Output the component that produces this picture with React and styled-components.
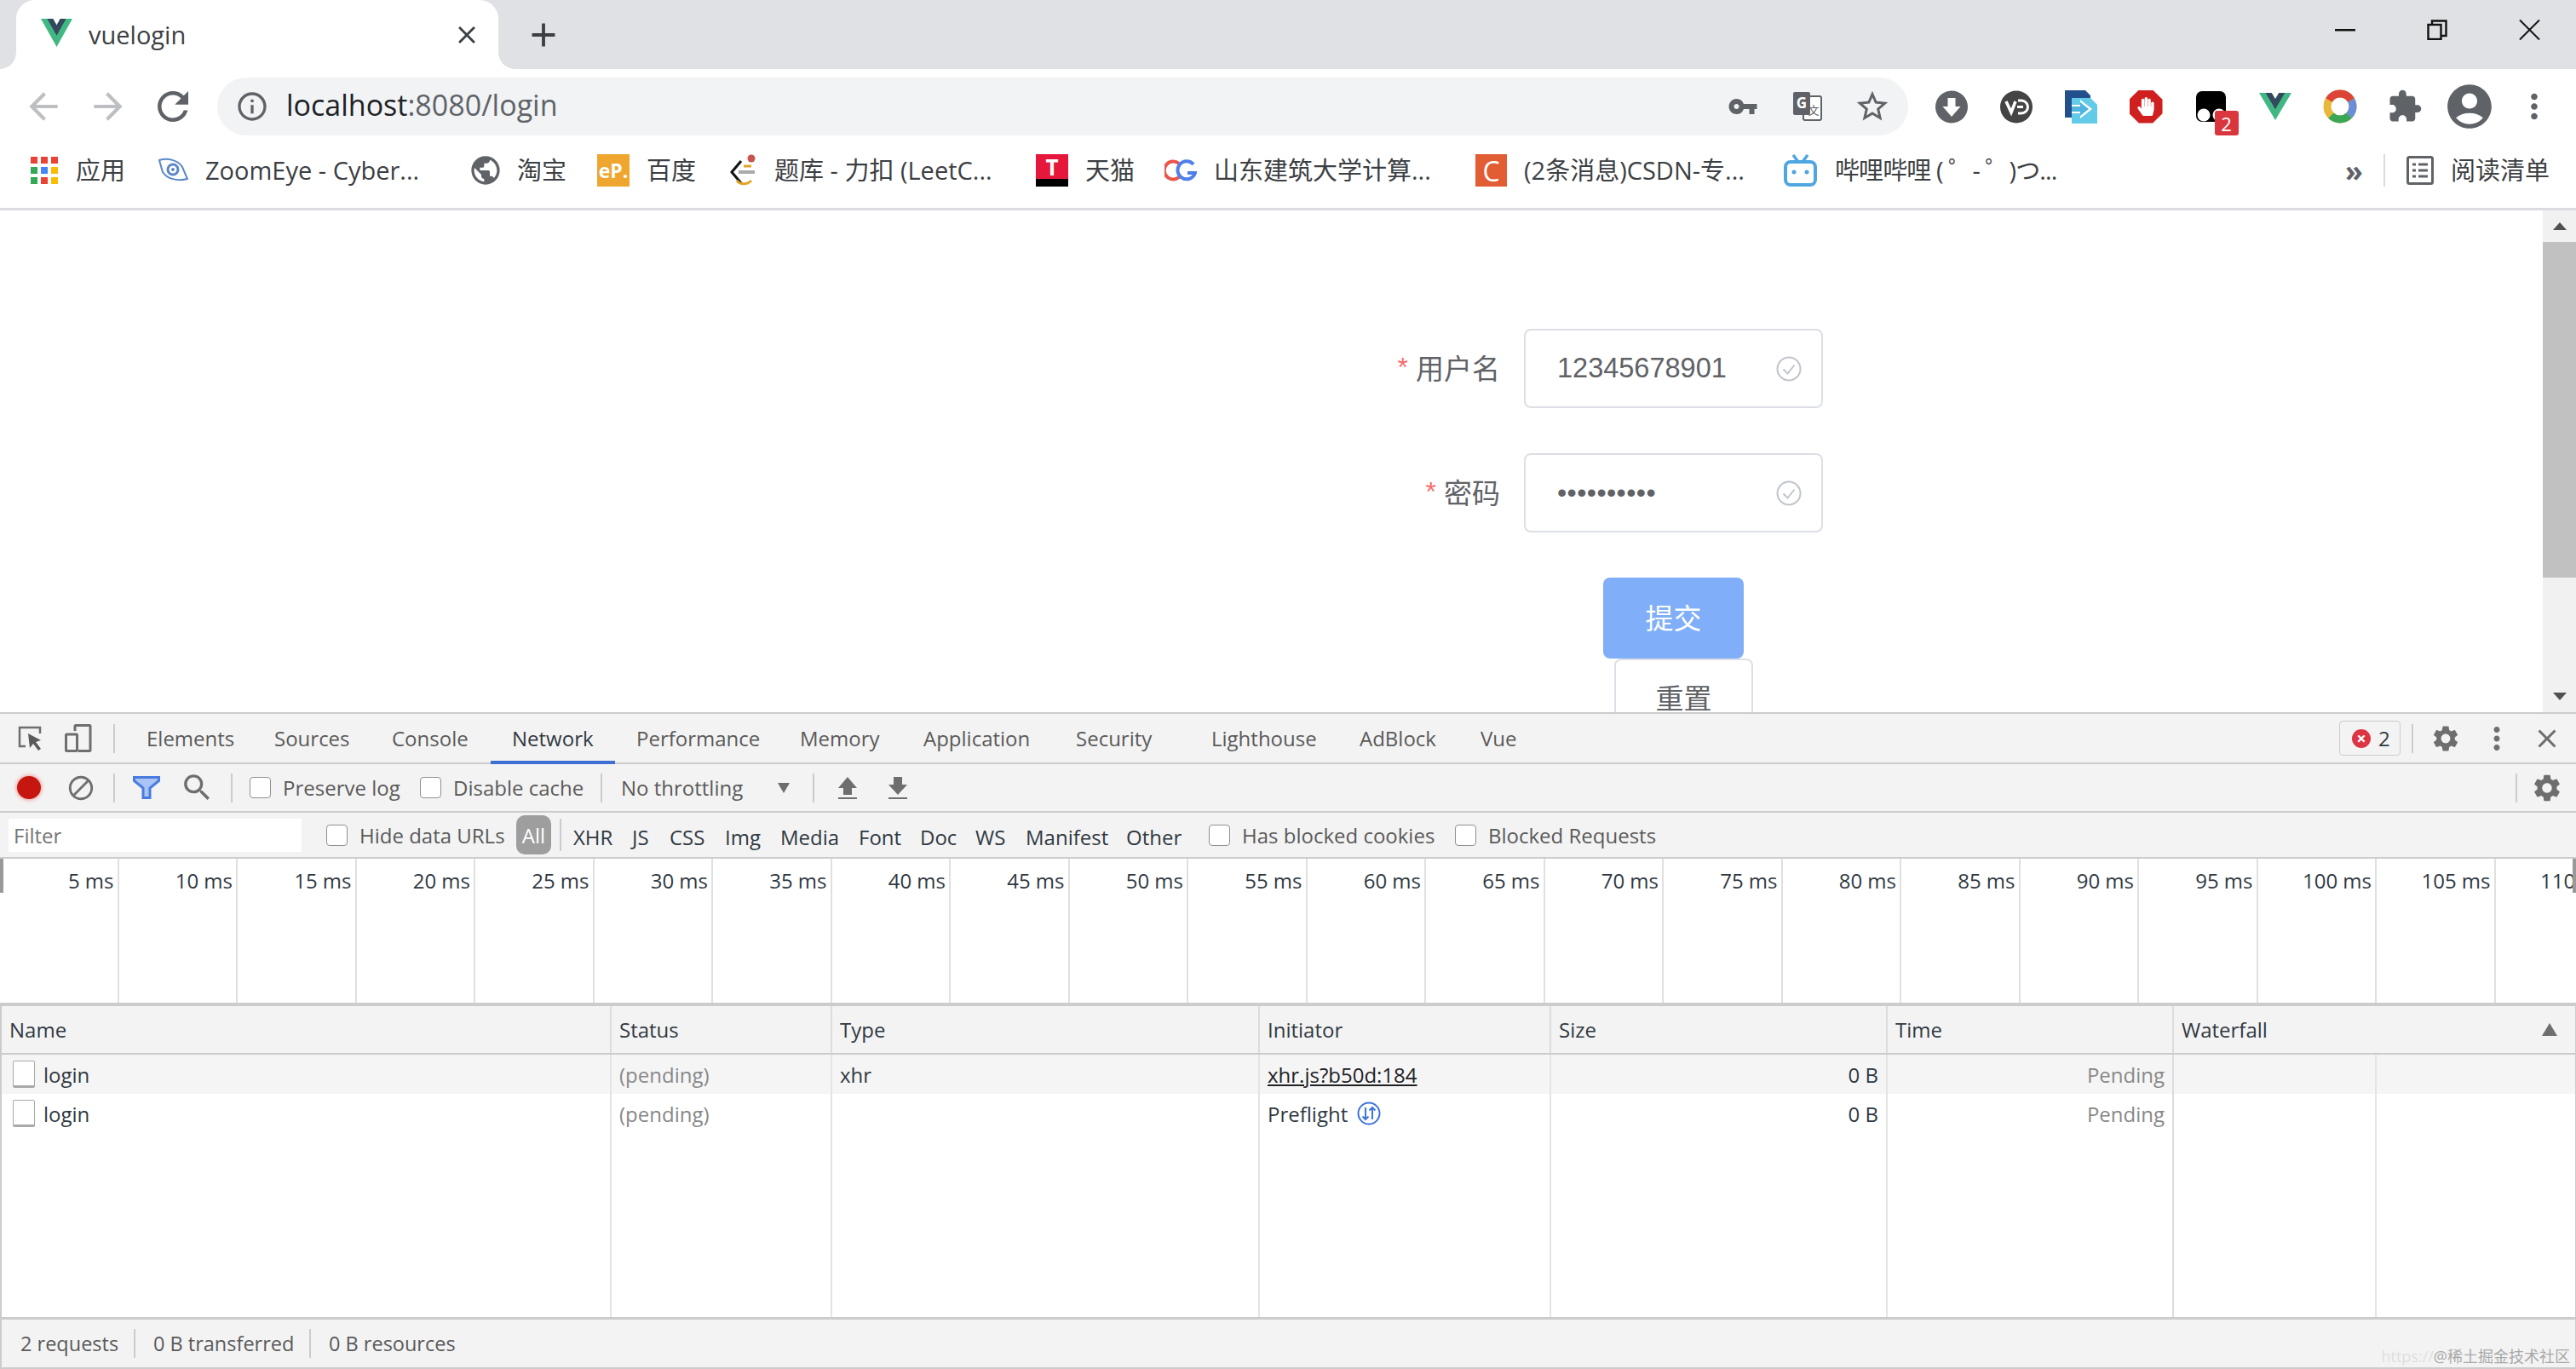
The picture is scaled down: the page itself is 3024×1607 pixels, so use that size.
import styled, { createGlobalStyle, css } from "styled-components";
import {
  MdArrowBack,
  MdArrowForward,
  MdRefresh,
  MdInfoOutline,
  MdVpnKey,
  MdStarBorder,
  MdExtension,
  MdAccountCircle,
  MdMoreVert,
  MdSettings,
  MdClose,
  MdSearch,
  MdBlock,
  MdPublic,
  MdAdd,
} from "react-icons/md";
import { FaHandPaper } from "react-icons/fa";

const sans = `"Open Sans", "Noto Sans CJK SC", sans-serif`;
const elementFont = `"Liberation Sans", "Noto Sans CJK SC", sans-serif`;

const GlobalStyle = createGlobalStyle`
  html, body {
    margin: 0;
    padding: 0;
    background: #fff;
  }
  * {
    box-sizing: border-box;
  }
`;

const offset = css`
  margin-left: ${(p) => p.$ml || 0}px;
`;

export default function App() {
  return (
    <Screen>
      <GlobalStyle />
      <TabStrip>
        <Tab>
          <VueLogo width={37} height={33} />
          <TabTitle>vuelogin</TabTitle>
          <MdClose size={34} color="#3c4043" />
        </Tab>
        <Slot $w={106}>
          <MdAdd size={46} color="#3c4043" />
        </Slot>
        <WindowButtons>
          <WindowButton>
            <MinimizeIcon />
          </WindowButton>
          <WindowButton>
            <RestoreIcon />
          </WindowButton>
          <WindowButton>
            <WindowCloseIcon />
          </WindowButton>
        </WindowButtons>
      </TabStrip>

      <Toolbar>
        <Slot $w={76}>
          <MdArrowBack size={50} color="#bdbfc2" />
        </Slot>
        <Slot $w={76}>
          <MdArrowForward size={50} color="#bdbfc2" />
        </Slot>
        <Slot $w={76}>
          <MdRefresh size={54} color="#5f6368" />
        </Slot>
        <Omnibox>
          <Slot $w={52}>
            <MdInfoOutline size={40} color="#5f6368" />
          </Slot>
          <Url>
            localhost<UrlRest>:8080/login</UrlRest>
          </Url>
          <Slot $w={76}>
            <MdVpnKey size={36} color="#5f6368" />
          </Slot>
          <Slot $w={76}>
            <TranslateIcon />
          </Slot>
          <Slot $w={76}>
            <MdStarBorder size={44} color="#5f6368" />
          </Slot>
        </Omnibox>
        <Extensions>
          <Slot $w={76}>
            <DownloadCircle />
          </Slot>
          <Slot $w={76}>
            <VdBadge />
          </Slot>
          <Slot $w={76}>
            <PasteIcon />
          </Slot>
          <Slot $w={76}>
            <Octagon>
              <FaHandPaper size={22} color="#fff" />
            </Octagon>
          </Slot>
          <Slot $w={76}>
            <MonkeyBox>
              <MonkeyIcon />
              <CountBadge>2</CountBadge>
            </MonkeyBox>
          </Slot>
          <Slot $w={76}>
            <VueLogo width={38} height={32} />
          </Slot>
          <Slot $w={76}>
            <RingIcon />
          </Slot>
          <Slot $w={76}>
            <MdExtension size={42} color="#5f6368" />
          </Slot>
          <Slot $w={76}>
            <MdAccountCircle size={62} color="#5f6368" />
          </Slot>
          <Slot $w={76}>
            <MdMoreVert size={46} color="#5f6368" />
          </Slot>
        </Extensions>
      </Toolbar>

      <BookmarkBar>
        <AppsIcon />
        <BookmarkText $ml={21} $w={56}>应用</BookmarkText>
        <EyeIcon $ml={41} />
        <BookmarkText $ml={20} $w={256}>ZoomEye - Cyber...</BookmarkText>
        <IconHolder $ml={53}>
          <MdPublic size={40} color="#5f6368" />
        </IconHolder>
        <BookmarkText $ml={17} $w={56}>淘宝</BookmarkText>
        <SquareIcon $ml={38} $w={38} $bg="#eea62f">eP.</SquareIcon>
        <BookmarkText $ml={20} $w={56}>百度</BookmarkText>
        <LeetIcon $ml={42} />
        <BookmarkText $ml={22} $w={259}>题库 - 力扣 (LeetC...</BookmarkText>
        <TmallIcon $ml={48}>T</TmallIcon>
        <BookmarkText $ml={20} $w={56}>天猫</BookmarkText>
        <CgIcon $ml={37} />
        <BookmarkText $ml={20} $w={249}>山东建筑大学计算...</BookmarkText>
        <SquareIcon $ml={58} $w={37} $bg="#e25c34" $big>C</SquareIcon>
        <BookmarkText $ml={20} $w={263}>(2条消息)CSDN-专...</BookmarkText>
        <BiliIcon $ml={42} />
        <BookmarkText $ml={21} $w={257} $ls={-0.9}>哔哩哔哩 ( ゜- ゜)つ...</BookmarkText>
        <Chevrons>»</Chevrons>
        <BarDivider />
        <ReadingIcon $ml={25} />
        <BookmarkText $ml={20} $w={114}>阅读清单</BookmarkText>
      </BookmarkBar>

      <Page>
        <PageBody>
          <FormRow>
            <FieldLabel>
              <Asterisk>*</Asterisk>用户名
            </FieldLabel>
            <InputBox>
              <InputValue>12345678901</InputValue>
              <CheckCircle />
            </InputBox>
          </FormRow>
          <FormRow>
            <FieldLabel>
              <Asterisk>*</Asterisk>密码
            </FieldLabel>
            <InputBox>
              <PasswordDots>••••••••••</PasswordDots>
              <CheckCircle />
            </InputBox>
          </FormRow>
          <SubmitButton>提交</SubmitButton>
          <ResetButton>重置</ResetButton>
        </PageBody>
        <Scrollbar>
          <ScrollArrow>
            <ArrowUp />
          </ScrollArrow>
          <ScrollThumb />
          <ScrollGap />
          <ScrollArrow>
            <ArrowDown />
          </ScrollArrow>
        </Scrollbar>
      </Page>

      <Devtools>
        <PanelBar>
          <Slot $w={56} $ml={8}>
            <InspectIcon />
          </Slot>
          <Slot $w={56}>
            <DeviceIcon />
          </Slot>
          <VerticalRule $ml={13} />
          <PanelTabs>
            {panels.map(([label, width]) => (
              <PanelTab key={label} $w={width} $active={label === "Network"}>
                {label}
              </PanelTab>
            ))}
          </PanelTabs>
          <ErrorBadge>
            <ErrorDot />2
          </ErrorBadge>
          <VerticalRule $ml={13} />
          <Slot $w={50} $ml={13}>
            <MdSettings size={36} color="#6e6e6e" />
          </Slot>
          <Slot $w={50} $ml={10}>
            <MdMoreVert size={42} color="#6e6e6e" />
          </Slot>
          <Slot $w={50} $ml={9}>
            <MdClose size={36} color="#6e6e6e" />
          </Slot>
        </PanelBar>

        <ActionBar>
          <RecordDot $ml={20} />
          <IconHolder $ml={30}>
            <MdBlock size={34} color="#6e6e6e" />
          </IconHolder>
          <VerticalRule $ml={21} />
          <FunnelIcon $ml={21} />
          <IconHolder $ml={23}>
            <MdSearch size={41} color="#6e6e6e" />
          </IconHolder>
          <VerticalRule $ml={19} />
          <CheckLabel $ml={20} $w={176}>
            <Check />
            Preserve log
          </CheckLabel>
          <CheckLabel $ml={24} $w={191}>
            <Check />
            Disable cache
          </CheckLabel>
          <VerticalRule $ml={21} />
          <ActionText $ml={22} $w={184}>No throttling</ActionText>
          <CaretDown />
          <VerticalRule $ml={27} />
          <TransferIcon $ml={27} $up />
          <TransferIcon $ml={35} />
          <SpacerRule />
          <Slot $w={40} $ml={15}>
            <MdSettings size={38} color="#6e6e6e" />
          </Slot>
        </ActionBar>

        <FilterBar>
          <FilterInput>Filter</FilterInput>
          <CheckLabel $ml={29} $w={210}>
            <Check />
            Hide data URLs
          </CheckLabel>
          <AllPill>All</AllPill>
          <VerticalRule $ml={10} $short />
          <TypeList>
            {types.map(([label, width]) => (
              <TypeItem key={label} $w={width}>
                {label}
              </TypeItem>
            ))}
          </TypeList>
          <CheckLabel $w={267}>
            <Check />
            Has blocked cookies
          </CheckLabel>
          <CheckLabel $ml={22} $w={240}>
            <Check />
            Blocked Requests
          </CheckLabel>
        </FilterBar>

        <Overview>
          {ticks.map((t) => (
            <Tick key={t}>{t} ms</Tick>
          ))}
          <MarkLeft />
          <MarkRight />
        </Overview>

        <Table>
          <HeaderRow>
            <HeaderCell>Name</HeaderCell>
            <HeaderCell>Status</HeaderCell>
            <HeaderCell>Type</HeaderCell>
            <HeaderCell>Initiator</HeaderCell>
            <HeaderCell>Size</HeaderCell>
            <HeaderCell>Time</HeaderCell>
            <HeaderCell>
              Waterfall
              <SortArrow />
            </HeaderCell>
          </HeaderRow>
          <BodyRow $shaded>
            <Cell>
              <FileIcon />
              login
            </Cell>
            <Cell $muted>(pending)</Cell>
            <Cell>xhr</Cell>
            <Cell>
              <InitiatorLink>xhr.js?b50d:184</InitiatorLink>
            </Cell>
            <Cell $right>0 B</Cell>
            <Cell $right $muted>Pending</Cell>
            <WaterfallCell />
          </BodyRow>
          <BodyRow>
            <Cell>
              <FileIcon />
              login
            </Cell>
            <Cell $muted>(pending)</Cell>
            <Cell />
            <Cell>
              Preflight
              <PreflightIcon />
            </Cell>
            <Cell $right>0 B</Cell>
            <Cell $right $muted>Pending</Cell>
            <WaterfallCell />
          </BodyRow>
          <FillerRow>
            <Cell />
            <Cell />
            <Cell />
            <Cell />
            <Cell />
            <Cell />
            <WaterfallCell />
          </FillerRow>
        </Table>

        <Summary>
          <SummaryItem $w={157} $pad={22}>2 requests</SummaryItem>
          <SummaryItem $w={206} $pad={21}>0 B transferred</SummaryItem>
          <SummaryItem $pad={21} $last>0 B resources</SummaryItem>
          <Watermark>
            <WatermarkUrl>https://</WatermarkUrl>@稀土掘金技术社区
          </Watermark>
        </Summary>
      </Devtools>
    </Screen>
  );
}

const panels = [
  ["Elements", 150],
  ["Sources", 138],
  ["Console", 141],
  ["Network", 146],
  ["Performance", 192],
  ["Memory", 145],
  ["Application", 179],
  ["Security", 159],
  ["Lighthouse", 174],
  ["AdBlock", 142],
  ["Vue", 92],
];

const types = [
  ["XHR", 69],
  ["JS", 44],
  ["CSS", 65],
  ["Img", 65],
  ["Media", 92],
  ["Font", 72],
  ["Doc", 65],
  ["WS", 59],
  ["Manifest", 118],
  ["Other", 97],
];

const ticks = Array.from({ length: 22 }, (_, i) => (i + 1) * 5);

/* drawn icons */

function VueLogo({ width, height }) {
  return (
    <svg width={width} height={height} viewBox="0 0 262 227" preserveAspectRatio="none">
      <path d="M161 0l-30 52-30-52H0l131 227L262 0z" fill="#41b883" />
      <path d="M161 0l-30 52-30-52H52l79 136L209 0z" fill="#34495e" />
    </svg>
  );
}

function MinimizeIcon() {
  return (
    <svg width="24" height="4" viewBox="0 0 24 4">
      <rect width="24" height="2.500" y="1" fill="#111" />
    </svg>
  );
}

function RestoreIcon() {
  return (
    <svg width="24" height="24" viewBox="0 0 24 24" fill="none" stroke="#111" strokeWidth="2.400">
      <rect x="1.500" y="6" width="15" height="17" />
      <path d="M6 5V1.500h16.500V19H17" />
    </svg>
  );
}

function WindowCloseIcon() {
  return (
    <svg width="25" height="24" viewBox="0 0 25 24" fill="none" stroke="#111" strokeWidth="2">
      <path d="M1 0.500l23 23M24 0.500l-23 23" />
    </svg>
  );
}

function TranslateIcon() {
  return (
    <svg width="34" height="36" viewBox="0 0 34 36">
      <rect x="12" y="6" width="21" height="28" rx="2" fill="#fff" stroke="#5f6368" strokeWidth="2" />
      <rect x="0" y="1" width="20" height="27" rx="2" fill="#5f6368" />
      <text x="10" y="20" textAnchor="middle" fontSize="17" fontWeight="700" fill="#fff" fontFamily="Open Sans">G</text>
      <text x="24" y="27" textAnchor="middle" fontSize="13" fill="#5f6368" fontFamily="Noto Sans CJK SC">文</text>
    </svg>
  );
}

function DownloadCircle() {
  return (
    <svg width="38" height="39" viewBox="0 0 38 39">
      <circle cx="19" cy="19.500" r="19" fill="#5f6368" />
      <path d="M14.500 9h9v10h6L19 31 8.500 19h6z" fill="#fff" />
    </svg>
  );
}

function VdBadge() {
  return (
    <svg width="38" height="39" viewBox="0 0 38 39">
      <circle cx="19" cy="19.500" r="19" fill="#444" />
      <path d="M7 13l6 13 5-13" fill="none" stroke="#fff" strokeWidth="3.500" />
      <path d="M21 12h4a7.500 7.500 0 0 1 0 15h-4M20 19.500h7" fill="none" stroke="#fff" strokeWidth="3" />
    </svg>
  );
}

function PasteIcon() {
  return (
    <svg width="38" height="39" viewBox="0 0 38 39">
      <path d="M0 0h24l6 6v4H8v22H0z" fill="#23508c" />
      <path d="M8 9h22l8 8v22H8z" fill="#62cbe8" />
      <path d="M8 17h10v-6l14 11-14 11v-6H8z" fill="#fff" />
      <path d="M18 14l10 8-10 8v-5H8v-6h10z" fill="#4fb4de" />
    </svg>
  );
}

function MonkeyIcon() {
  return (
    <svg width="35" height="36" viewBox="0 0 35 36">
      <rect width="35" height="36" rx="7" fill="#000" />
      <circle cx="9" cy="28" r="7.500" fill="#fff" />
      <circle cx="27" cy="28" r="7.500" fill="#fff" />
    </svg>
  );
}

function RingIcon() {
  return (
    <svg width="40" height="40" viewBox="0 0 40 40" fill="none" strokeWidth="9">
      <circle cx="20" cy="20" r="15" stroke="#e8b83a" />
      <path d="M7 12.500A15 15 0 0 1 33 12.500" stroke="#db4437" />
      <path d="M33 12.500A15 15 0 0 1 30.600 30.600" stroke="#6a8fd8" />
      <path d="M30.600 30.600A15 15 0 0 1 9.400 30.600" stroke="#3aa757" />
    </svg>
  );
}

function AppsIcon() {
  const colors = ["#ea4335", "#ea4335", "#ea4335", "#34a853", "#4285f4", "#fbbc05", "#34a853", "#ea4335", "#fbbc05"];
  return (
    <svg width="32" height="32" viewBox="0 0 32 32">
      {colors.map((c, i) => (
        <rect key={i} x={(i % 3) * 12} y={Math.floor(i / 3) * 12} width="8" height="8" fill={c} />
      ))}
    </svg>
  );
}

const Svg = styled.svg`
  flex: none;
  ${offset}
`;

function EyeIcon({ $ml }) {
  return (
    <Svg $ml={$ml} width="35" height="34" viewBox="0 0 35 34" fill="none" stroke="#5b87c7">
      <path d="M1 5c10-3 22 0 27 8l6 14c-12 3-24 0-29-8z" strokeWidth="2" />
      <circle cx="17" cy="16" r="6" strokeWidth="3" />
      <circle cx="17" cy="16" r="1.500" fill="#5b87c7" />
    </Svg>
  );
}

function LeetIcon({ $ml }) {
  return (
    <Svg $ml={$ml} width="30" height="38" viewBox="0 0 30 38" fill="none" strokeWidth="3">
      <path d="M13 8L2 21l11 13" stroke="#111" />
      <path d="M16 14l9 0" stroke="#e0a526" />
      <path d="M10 21h19" stroke="#aaa" strokeWidth="4" />
      <path d="M8 31c4 5 12 5 17 0" stroke="#e0a526" />
      <circle cx="25" cy="5" r="4.500" fill="#c8534f" stroke="none" />
    </Svg>
  );
}

function CgIcon({ $ml }) {
  return (
    <Svg $ml={$ml} width="38" height="26" viewBox="0 0 38 26" fill="none" strokeWidth="4">
      <path d="M17 5a10.500 10.500 0 1 0 0 16" stroke="#e8564c" />
      <path d="M34 6a10.500 10.500 0 1 0 2 10h-9" stroke="#4f7fe8" />
    </Svg>
  );
}

function BiliIcon({ $ml }) {
  return (
    <Svg $ml={$ml} width="39" height="38" viewBox="0 0 39 38" fill="none">
      <rect x="2" y="9" width="35" height="27" rx="6" stroke="#4fa6e0" strokeWidth="4" />
      <path d="M11 1l6 8M28 1l-6 8" stroke="#4fa6e0" strokeWidth="3.500" />
      <circle cx="12" cy="21" r="2.500" fill="#4fa6e0" />
      <circle cx="27" cy="21" r="2.500" fill="#4fa6e0" />
    </Svg>
  );
}

function ReadingIcon({ $ml }) {
  return (
    <Svg $ml={$ml} width="32" height="34" viewBox="0 0 32 34" fill="none" stroke="#5f6368" strokeWidth="3">
      <rect x="1.500" y="1.500" width="29" height="31" rx="2" />
      <path d="M7 10h4M14 10h11M7 17h4M14 17h11M7 24h4M14 24h11" />
    </Svg>
  );
}

function CheckCircle() {
  return (
    <svg width="30" height="30" viewBox="0 0 30 30" fill="none" stroke="#c0c4cc" strokeWidth="2">
      <circle cx="15" cy="15" r="13.500" />
      <path d="M8.500 15.500l5 5 8-10" />
    </svg>
  );
}

function InspectIcon() {
  return (
    <svg width="30" height="30" viewBox="0 0 30 30" fill="none">
      <path d="M9 24H2V2h24v7" stroke="#6e6e6e" strokeWidth="2.500" />
      <path d="M12 9l15 8-6 2 6 8-3 2-6-8-4 5z" fill="#5a5a5a" />
    </svg>
  );
}

function DeviceIcon() {
  return (
    <svg width="32" height="33" viewBox="0 0 32 33" fill="none" stroke="#6e6e6e" strokeWidth="3">
      <path d="M12 8V2.500a1 1 0 0 1 1-1h16a1 1 0 0 1 1 1v28a1 1 0 0 1-1 1H16" />
      <rect x="1.500" y="12" width="13" height="19.500" rx="1" />
    </svg>
  );
}

function FunnelIcon({ $ml }) {
  return (
    <Svg $ml={$ml} width="32" height="27" viewBox="0 0 32 27">
      <path d="M1.500 1.500h29v4L20 14v11.500h-8V14L1.500 5.500z" fill="#a9c4f5" stroke="#4a7ce0" strokeWidth="3" />
    </Svg>
  );
}

function TransferIcon({ $ml, $up }) {
  return (
    <Svg $ml={$ml} width="24" height="26" viewBox="0 0 24 26" fill="#6e6e6e">
      <path d={$up ? "M12 0l11 13h-6v8H7v-8H1z" : "M7 0h10v9h6L12 21 1 9h6z"} />
      <rect x="1" y="24" width="22" height="2" />
    </Svg>
  );
}

function PreflightIcon() {
  return (
    <PreflightSvg width="28" height="28" viewBox="0 0 28 28" fill="none" stroke="#3f74dc" strokeWidth="2">
      <circle cx="14" cy="14" r="12.500" />
      <path d="M10 7v14M6.500 17.500L10 21l3.500-3.500M18 21V7M14.500 10.500L18 7l3.500 3.500" />
    </PreflightSvg>
  );
}

/* layout */

const Screen = styled.div`
  width: 3024px;
  height: 1607px;
  display: flex;
  flex-direction: column;
  overflow: hidden;
  background: #fff;
  font-family: ${sans};
`;

const Slot = styled.div`
  flex: none;
  width: ${(p) => p.$w}px;
  display: flex;
  align-items: center;
  justify-content: center;
  ${offset}
`;

const IconHolder = styled.div`
  flex: none;
  display: flex;
  align-items: center;
  ${offset}
`;

const TabStrip = styled.div`
  flex: none;
  height: 81px;
  display: flex;
  padding-left: 19px;
  background: #dfe1e5;
`;

const Tab = styled.div`
  position: relative;
  width: 566px;
  display: flex;
  align-items: center;
  padding: 0 20px 0 29px;
  background: #fff;
  border-radius: 22px 22px 0 0;

  &::before,
  &::after {
    content: "";
    position: absolute;
    bottom: 0;
    width: 19px;
    height: 19px;
  }

  &::before {
    left: -19px;
    background: radial-gradient(circle at 0 0, #dfe1e5 18.500px, #fff 19px);
  }

  &::after {
    right: -19px;
    background: radial-gradient(circle at 100% 0, #dfe1e5 18.500px, #fff 19px);
  }

  & > svg:first-child {
    margin-top: -4px;
  }
`;

const TabTitle = styled.span`
  flex: 1;
  margin-left: 19px;
  font-size: 29px;
  color: #3c4043;
`;

const WindowButtons = styled.div`
  display: flex;
  margin-left: auto;
  padding-right: 1px;
`;

const WindowButton = styled.div`
  width: 108px;
  height: 70px;
  display: flex;
  align-items: center;
  justify-content: center;
`;

const Toolbar = styled.div`
  flex: none;
  height: 84px;
  display: flex;
  align-items: center;
  padding: 4px 0 0 13px;
  background: #fff;
`;

const Omnibox = styled.div`
  flex: none;
  width: 1985px;
  height: 68px;
  margin-left: 14px;
  display: flex;
  align-items: center;
  padding: 0 4px 0 15px;
  background: #f1f3f4;
  border-radius: 34px;
`;

const Url = styled.div`
  flex: 1;
  margin-left: 14px;
  padding-bottom: 4px;
  font-size: 34px;
  color: #202124;
`;

const UrlRest = styled.span`
  color: #5f6368;
`;

const Extensions = styled.div`
  flex: none;
  margin-left: 13px;
  display: flex;
  align-items: center;
`;

const Octagon = styled.div`
  width: 39px;
  height: 39px;
  display: flex;
  align-items: center;
  justify-content: center;
  background: #d01f1f;
  clip-path: polygon(29% 0, 71% 0, 100% 29%, 100% 71%, 71% 100%, 29% 100%, 0 71%, 0 29%);
`;

const MonkeyBox = styled.div`
  position: relative;
  width: 35px;
  height: 36px;
`;

const CountBadge = styled.div`
  position: absolute;
  left: 22px;
  top: 23px;
  width: 28px;
  height: 29px;
  display: flex;
  align-items: center;
  justify-content: center;
  background: #d9363e;
  border-radius: 3px;
  color: #fff;
  font-size: 22px;
`;

const BookmarkBar = styled.div`
  flex: none;
  height: 82px;
  display: flex;
  align-items: center;
  padding: 0 0 9px 36px;
  border-bottom: 3px solid #dadce0;
  background: #fff;
`;

const BookmarkText = styled.div`
  flex: none;
  width: ${(p) => p.$w}px;
  font-size: 29px;
  line-height: 38px;
  letter-spacing: ${(p) => p.$ls || 0}px;
  color: #3c4043;
  white-space: nowrap;
  ${offset}
`;

const SquareIcon = styled.div`
  flex: none;
  width: ${(p) => p.$w}px;
  height: 38px;
  display: flex;
  align-items: center;
  justify-content: center;
  background: ${(p) => p.$bg};
  color: #fff;
  font-size: ${(p) => (p.$big ? 32 : 23)}px;
  font-weight: ${(p) => (p.$big ? 400 : 700)};
  ${offset}
`;

const TmallIcon = styled.div`
  flex: none;
  width: 38px;
  height: 38px;
  display: flex;
  justify-content: center;
  background: linear-gradient(#e5173a 0 76%, #000 76%);
  color: #fff;
  font-size: 26px;
  font-weight: 700;
  line-height: 30px;
  ${offset}
`;

const Chevrons = styled.div`
  flex: none;
  margin-left: 342px;
  width: 21px;
  font-size: 34px;
  line-height: 36px;
  font-weight: 700;
  color: #5f6368;
`;

const BarDivider = styled.div`
  flex: none;
  width: 2px;
  height: 38px;
  margin-left: 24px;
  background: #dadce0;
`;

const Page = styled.div`
  flex: none;
  height: 589px;
  display: flex;
  overflow: hidden;
  background: #fff;
`;

const PageBody = styled.div`
  flex: 1;
  padding-top: 139px;
  font-family: ${elementFont};
`;

const FormRow = styled.div`
  display: grid;
  grid-template-columns: 1761px 351px;
  column-gap: 28px;
  height: 93px;
  margin-bottom: 53px;
`;

const FieldLabel = styled.div`
  display: flex;
  align-items: center;
  justify-content: flex-end;
  padding-bottom: 3px;
  font-size: 33px;
  color: #606266;
`;

const Asterisk = styled.span`
  margin-right: 9px;
  font-size: 32px;
  color: #f56c6c;
`;

const InputBox = styled.div`
  display: flex;
  align-items: center;
  justify-content: space-between;
  padding: 0 23px 0 37px;
  border: 2px solid #dcdfe6;
  border-radius: 8px;
`;

const InputValue = styled.span`
  font-size: 32.500px;
  color: #606266;
`;

const PasswordDots = styled.span`
  font-size: 32px;
  letter-spacing: 0.400px;
  color: #606266;
`;

const elementButton = css`
  display: flex;
  align-items: center;
  justify-content: center;
  padding-bottom: 4px;
  font-size: 33px;
  border-radius: 8px;
`;

const SubmitButton = styled.div`
  ${elementButton}
  width: 165px;
  height: 95px;
  margin-left: 1882px;
  background: #80aef9;
  color: #fff;
`;

const ResetButton = styled.div`
  ${elementButton}
  width: 163px;
  height: 93px;
  margin-left: 1895px;
  border: 2px solid #dcdfe6;
  color: #606266;
`;

const Scrollbar = styled.div`
  flex: none;
  width: 39px;
  display: flex;
  flex-direction: column;
  background: #f1f1f1;
`;

const ScrollArrow = styled.div`
  flex: none;
  height: 37px;
  display: flex;
  align-items: center;
  justify-content: center;
`;

const ArrowUp = styled.div`
  border-left: 8px solid transparent;
  border-right: 8px solid transparent;
  border-bottom: 9px solid #505050;
`;

const ArrowDown = styled.div`
  border-left: 8px solid transparent;
  border-right: 8px solid transparent;
  border-top: 9px solid #505050;
`;

const ScrollThumb = styled.div`
  flex: none;
  height: 394px;
  background: #c1c1c1;
`;

const ScrollGap = styled.div`
  flex: 1;
`;

const Devtools = styled.div`
  flex: 1;
  min-height: 0;
  display: flex;
  flex-direction: column;
  background: #f3f3f3;
  font-size: 24px;
  color: #303942;
`;

const PanelBar = styled.div`
  flex: none;
  height: 61px;
  display: flex;
  align-items: center;
  padding-right: 9px;
  border-top: 2px solid #ccc;
  border-bottom: 2px solid #ccc;
`;

const VerticalRule = styled.div`
  flex: none;
  width: 2px;
  height: ${(p) => (p.$short ? 38 : 34)}px;
  background: #ccc;
  ${offset}
`;

const PanelTabs = styled.div`
  flex: 1;
  align-self: stretch;
  display: flex;
  margin-left: 12px;
`;

const PanelTab = styled.div`
  flex: none;
  width: ${(p) => p.$w}px;
  padding: 2px 0 0 25px;
  margin-bottom: -2px;
  display: flex;
  align-items: center;
  color: ${(p) => (p.$active ? "#303942" : "#5a5a5a")};
  border-bottom: 4px solid ${(p) => (p.$active ? "#3f6fd4" : "transparent")};
`;

const ErrorBadge = styled.div`
  flex: none;
  width: 72px;
  height: 41px;
  display: flex;
  align-items: center;
  gap: 9px;
  padding-left: 14px;
  border: 1px solid #ccc;
  border-radius: 4px;
`;

const ErrorDot = styled.div`
  position: relative;
  flex: none;
  width: 22px;
  height: 22px;
  border-radius: 50%;
  background: #dc3543;

  &::before {
    content: "×";
    position: absolute;
    inset: 0;
    display: flex;
    align-items: center;
    justify-content: center;
    color: #fff;
    font-size: 20px;
    font-weight: 700;
  }
`;

const ActionBar = styled.div`
  flex: none;
  height: 57px;
  display: flex;
  align-items: center;
  padding-right: 14px;
  border-bottom: 2px solid #ccc;
`;

const RecordDot = styled.div`
  flex: none;
  width: 28px;
  height: 27px;
  border-radius: 50%;
  background: #c5170f;
  box-shadow: 0 0 4px 1px #ee9a96;
  ${offset}
`;

const CheckLabel = styled.div`
  flex: none;
  width: ${(p) => p.$w}px;
  display: flex;
  align-items: center;
  gap: 14px;
  color: #5a5a5a;
  white-space: nowrap;
  ${offset}
`;

const Check = styled.div`
  flex: none;
  width: 25px;
  height: 25px;
  background: #fff;
  border: 1.500px solid #909090;
  border-radius: 4px;
`;

const ActionText = styled.div`
  flex: none;
  width: ${(p) => p.$w}px;
  color: #5a5a5a;
  ${offset}
`;

const CaretDown = styled.div`
  flex: none;
  border-left: 7px solid transparent;
  border-right: 7px solid transparent;
  border-top: 12px solid #6e6e6e;
`;

const SpacerRule = styled(VerticalRule)`
  margin-left: auto;
`;

const FilterBar = styled.div`
  flex: none;
  height: 54px;
  display: flex;
  align-items: center;
  padding-left: 10px;
  border-bottom: 2px solid #ccc;
`;

const FilterInput = styled.div`
  flex: none;
  width: 344px;
  height: 39px;
  display: flex;
  align-items: center;
  padding-left: 6px;
  background: #fff;
  color: #757575;
`;

const AllPill = styled.div`
  flex: none;
  width: 41px;
  height: 46px;
  margin-left: 13px;
  display: flex;
  align-items: center;
  justify-content: center;
  border-radius: 10px;
  background: #9e9e9e;
  color: #fff;
`;

const TypeList = styled.div`
  flex: none;
  display: flex;
  margin-left: 14px;
  padding-top: 4px;
`;

const TypeItem = styled.div`
  flex: none;
  width: ${(p) => p.$w}px;
  color: #303942;
`;

const Overview = styled.div`
  position: relative;
  flex: none;
  height: 173px;
  display: flex;
  overflow: hidden;
  background: #fff;
  border-bottom: 4px solid #ccc;
`;

const Tick = styled.div`
  flex: none;
  width: 139.500px;
  padding: 9px 4px 0 0;
  text-align: right;
  white-space: nowrap;
  color: #303942;
  border-right: 2px solid #e0e0e0;
`;

const MarkLeft = styled.div`
  position: absolute;
  left: 0;
  top: 0;
  width: 4px;
  height: 40px;
  background: #999;
`;

const MarkRight = styled(MarkLeft)`
  left: auto;
  right: 0;
`;

const Table = styled.div`
  flex: 1;
  min-height: 0;
  display: flex;
  flex-direction: column;
  background: #fff;
  border-left: 2px solid #ccc;
  border-right: 1px solid #ccc;
`;

const columns = css`
  display: grid;
  grid-template-columns: 716px 259px 502px 342px 395px 336px 1fr;
`;

const HeaderRow = styled.div`
  ${columns}
  flex: none;
  height: 57px;
  background: #f3f3f3;
  border-bottom: 2px solid #ccc;
`;

const HeaderCell = styled.div`
  position: relative;
  display: flex;
  align-items: center;
  padding-left: 9px;
  border-right: 2px solid #dcdcdc;

  &:last-child {
    border-right: none;
  }
`;

const SortArrow = styled.div`
  position: absolute;
  right: 21px;
  top: 20px;
  border-left: 9px solid transparent;
  border-right: 9px solid transparent;
  border-bottom: 15px solid #6e6e6e;
`;

const BodyRow = styled.div`
  ${columns}
  flex: none;
  height: 46px;
  background: ${(p) => (p.$shaded ? "#f5f5f5" : "#fff")};
`;

const FillerRow = styled.div`
  ${columns}
  flex: 1;
`;

const Cell = styled.div`
  display: flex;
  align-items: center;
  justify-content: ${(p) => (p.$right ? "flex-end" : "flex-start")};
  padding: 0 9px;
  border-right: 2px solid #e4e4e4;
  color: ${(p) => (p.$muted ? "#888" : "#303942")};
`;

const WaterfallCell = styled.div`
  border-left: 2px solid #dcdcdc;
  margin-left: -2px;

  &::before {
    content: "";
    display: block;
    width: 236px;
    height: 100%;
    border-right: 2px solid #e4e4e4;
  }
`;

const FileIcon = styled.div`
  flex: none;
  width: 26px;
  height: 32px;
  margin: 0 10px 0 4px;
  background: #fff;
  border: 1.500px solid #a9a9a9;
  border-bottom-width: 3px;
  border-radius: 2px;
`;

const InitiatorLink = styled.span`
  color: #202124;
  text-decoration: underline;
`;

const PreflightSvg = styled.svg`
  flex: none;
  margin-left: 11px;
`;

const Summary = styled.div`
  position: relative;
  flex: none;
  height: 61px;
  display: flex;
  align-items: center;
  font-size: 23.500px;
  border-top: 3px solid #ccc;
  border-bottom: 2px solid #ccc;
  border-left: 2px solid #ccc;
  border-right: 1px solid #ccc;
  color: #5a5a5a;
`;

const SummaryItem = styled.div`
  flex: none;
  ${(p) => p.$w && `width: ${p.$w}px;`}
  height: 34px;
  display: flex;
  align-items: center;
  padding-left: ${(p) => p.$pad}px;
  border-right: ${(p) => (p.$last ? "none" : "2px solid #ccc")};
`;

const Watermark = styled.div`
  position: absolute;
  right: 6px;
  bottom: 0;
  font-size: 18px;
  line-height: 26px;
  color: #a8a8a8;
`;

const WatermarkUrl = styled.span`
  color: #dedede;
`;
